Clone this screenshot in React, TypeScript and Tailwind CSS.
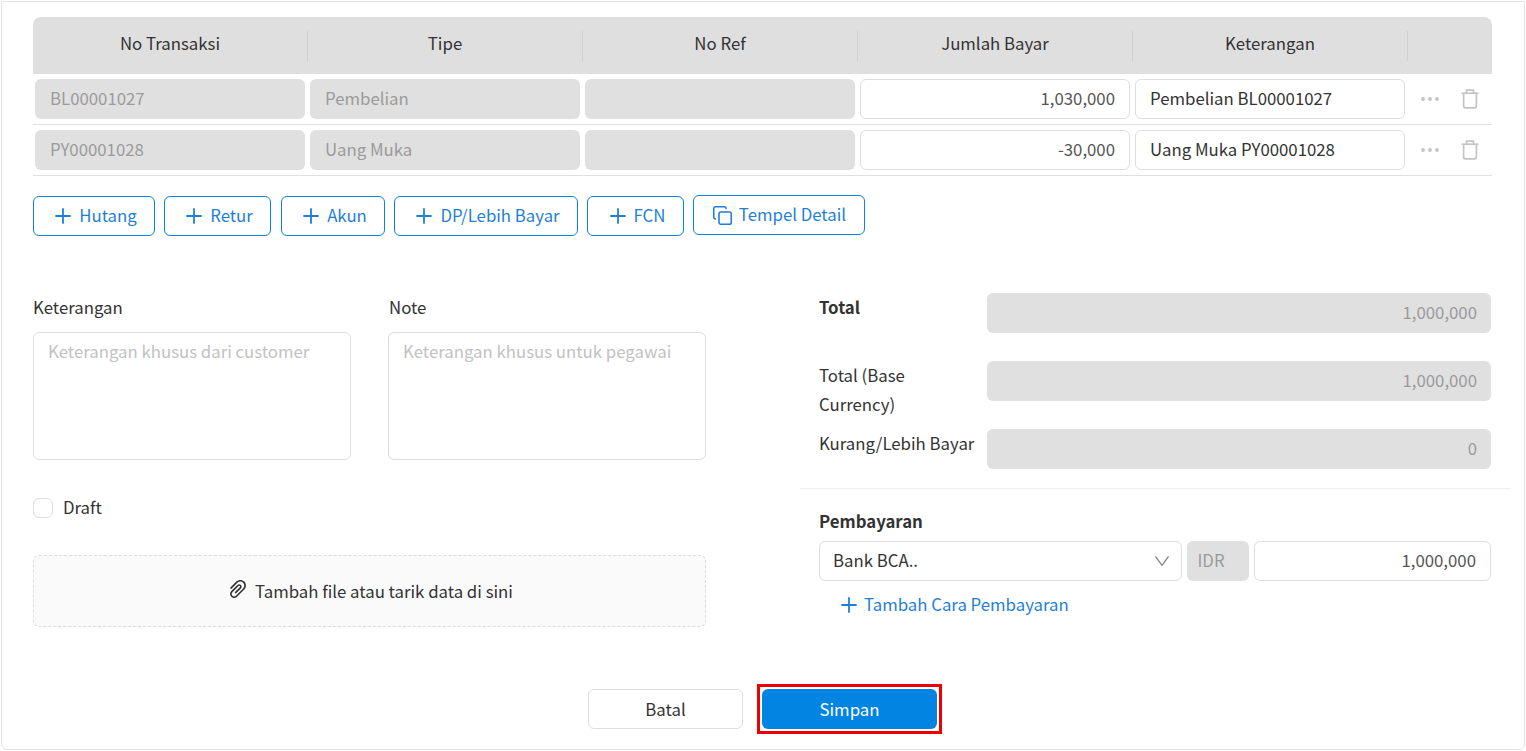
import { Copy, Ellipsis, Plus } from 'lucide-react'
import { AiOutlinePaperClip } from 'react-icons/ai'

const font = { fontFamily: '"Noto Sans CJK KR", "Noto Sans", sans-serif' }

const rows = [
  { no: 'BL00001027', tipe: 'Pembelian', jumlah: '1,030,000', ket: 'Pembelian BL00001027' },
  { no: 'PY00001028', tipe: 'Uang Muka', jumlah: '-30,000', ket: 'Uang Muka PY00001028' },
]

const addButtons = [
  { label: 'Hutang', className: 'w-[122px]' },
  { label: 'Retur', className: 'w-[107px]' },
  { label: 'Akun', className: 'ml-[1px] w-[104px]' },
  { label: 'DP/Lebih Bayar', className: 'w-[184px]' },
  { label: 'FCN', className: 'w-[97px]' },
]

function TrashIcon() {
  return (
    <svg width="20" height="20" viewBox="0 0 20 20" fill="none" stroke="#c4c4c4" strokeWidth="1.7" strokeLinejoin="round">
      <path d="M1.500 4.200h17" />
      <path d="M6.500 4V1.200h7V4" />
      <path d="M3.600 4.200v12.600c0 1.200.8 2 2 2h8.800c1.200 0 2-.8 2-2V4.200" />
    </svg>
  )
}

function ReadOnlyField({ value, className = '' }: { value?: string; className?: string }) {
  return <div className={`flex h-10 items-center rounded-md bg-[#e0e0e0] text-[#9b9b9b] ${className}`}>{value}</div>
}

function SummaryRow({ label, value, bold }: { label: React.ReactNode; value: string; bold?: boolean }) {
  return (
    <div className="flex h-[68px] items-start">
      <div className={`w-[168px] pr-2 leading-[29px] text-[#333] ${bold ? 'font-bold' : ''}`}>{label}</div>
      <ReadOnlyField value={value} className="flex-1 justify-end px-[14px]" />
    </div>
  )
}

export default function App() {
  return (
    <div style={font} className="h-[751px] w-[1526px] overflow-hidden bg-white p-[1px] text-[16.800px] text-[#333]">
      <div className="h-[749px] w-[1524px] rounded-b-md border border-[#e4e4e4] px-[31px] pt-[15px]">
        {/* Table */}
        <div className="w-[1459px]">
          <div className="flex h-[57px] items-center rounded-t-lg bg-[#dfdfdf]">
            {['No Transaksi', 'Tipe', 'No Ref', 'Jumlah Bayar', 'Keterangan'].map((title) => (
              <div key={title} className="flex h-[30px] w-[275px] items-center justify-center border-r border-[#d0d0d0] pb-[3px]">
                {title}
              </div>
            ))}
          </div>
          {rows.map((row) => (
            <div key={row.no} className="flex h-[51px] items-center gap-[5px] border-b border-[#e0e0e0] px-[2px]">
              <ReadOnlyField value={row.no} className="w-[270px] px-[15px]" />
              <ReadOnlyField value={row.tipe} className="w-[270px] px-[15px]" />
              <ReadOnlyField className="w-[270px]" />
              <div className="flex h-10 w-[270px] items-center justify-end rounded-md border border-[#dedede] px-[14px] text-[#555]">{row.jumlah}</div>
              <div className="flex h-10 w-[270px] items-center rounded-md border border-[#dedede] px-[14px]">{row.ket}</div>
              <div className="ml-[8px] flex w-[24px] justify-center text-[#c4c4c4]">
                <Ellipsis size={24} strokeWidth={1.8} />
              </div>
              <div className="ml-[13px]">
                <TrashIcon />
              </div>
            </div>
          ))}
        </div>

        {/* Add buttons */}
        <div className="mt-[20px] flex items-start gap-[9px] text-[#1f7fd6]">
          {addButtons.map((btn) => (
            <button key={btn.label} className={`flex h-10 ${btn.className} items-center justify-center gap-[4px] rounded-md border border-[#0a84e0]`}>
              <Plus size={24} strokeWidth={1.800} />
              <span>{btn.label}</span>
            </button>
          ))}
          <button className="-mt-[1px] flex h-10 w-[172px] items-center justify-center gap-[6px] rounded-md border border-[#0a84e0]">
            <Copy size={21} strokeWidth={1.800} />
            <span>Tempel Detail</span>
          </button>
        </div>

        <div className="mt-[57px] flex items-start">
          {/* Left column */}
          <div className="w-[673px]">
            <div className="flex gap-[37px]">
              <div className="w-[318px]">
                <div className="leading-[29px]">Keterangan</div>
                <div className="mt-[10px] h-[128px] rounded-md border border-[#dedede] px-[14px] py-[4px] leading-[29px] text-[#c2c2c2]">
                  Keterangan khusus dari customer
                </div>
              </div>
              <div className="w-[318px]">
                <div className="ml-[1px] leading-[29px]">Note</div>
                <div className="mt-[10px] h-[128px] rounded-md border border-[#dedede] px-[14px] py-[4px] leading-[29px] text-[#c2c2c2]">
                  Keterangan khusus untuk pegawai
                </div>
              </div>
            </div>
            <div className="mt-[35px] flex items-center gap-[10px]">
              <span className="h-5 w-5 rounded-md border border-[#dedede]" />
              <span>Draft</span>
            </div>
            <div className="mt-[35px] flex h-[72px] items-center justify-center gap-[5px] rounded-md border border-dashed border-[#dcdcdc] bg-[#fafafa]">
              <AiOutlinePaperClip size={24} className="-mt-[5px] text-[#333]" />
              <span>Tambah file atau tarik data di sini</span>
            </div>
          </div>

          {/* Right column */}
          <div className="ml-[94px] w-[711px]">
            <div className="pl-[19px] pr-[20px]">
              <SummaryRow label="Total" value="1,000,000" bold />
              <SummaryRow label={<>Total (Base Currency)</>} value="1,000,000" />
              <SummaryRow label="Kurang/Lebih Bayar" value="0" />
            </div>
            <div className="mt-[-9px] border-t border-[#eeeeee] pl-[19px] pr-[20px] pt-[18px]">
              <div className="font-bold leading-[29px]">Pembayaran</div>
              <div className="mt-[5px] flex gap-[5px]">
                <div className="flex h-10 w-[364px] items-center justify-between rounded-md border border-[#dedede] pl-[13px] pr-[12px]">
                  <span>Bank BCA..</span>
                  <svg width="14" height="10" viewBox="0 0 14 10" fill="none" stroke="#888" strokeWidth="1.300">
                    <path d="M.5.500 7 9.300 13.500.5" />
                  </svg>
                </div>
                <ReadOnlyField value="IDR" className="w-[62px] px-[10px]" />
                <div className="flex h-10 w-[237px] items-center justify-end rounded-md border border-[#dedede] px-[14px] text-[#555]">1,000,000</div>
              </div>
              <div className="ml-[18px] mt-[9px] flex items-center gap-[3px] leading-[29px] text-[#1f7fd6]">
                <Plus size={24} strokeWidth={1.800} />
                <span>Tambah Cara Pembayaran</span>
              </div>
            </div>
          </div>
        </div>

        {/* Footer */}
        <div className="mt-[57px] flex items-center justify-center gap-[14px] pl-[4px]">
          <button className="h-10 w-[155px] rounded-md border border-[#dedede]">Batal</button>
          <div className="border-[3px] border-[#ee0000] p-[2px]">
            <button className="block h-10 w-[175px] rounded-md bg-[#0284e2] text-white">Simpan</button>
          </div>
        </div>
      </div>
    </div>
  )
}
